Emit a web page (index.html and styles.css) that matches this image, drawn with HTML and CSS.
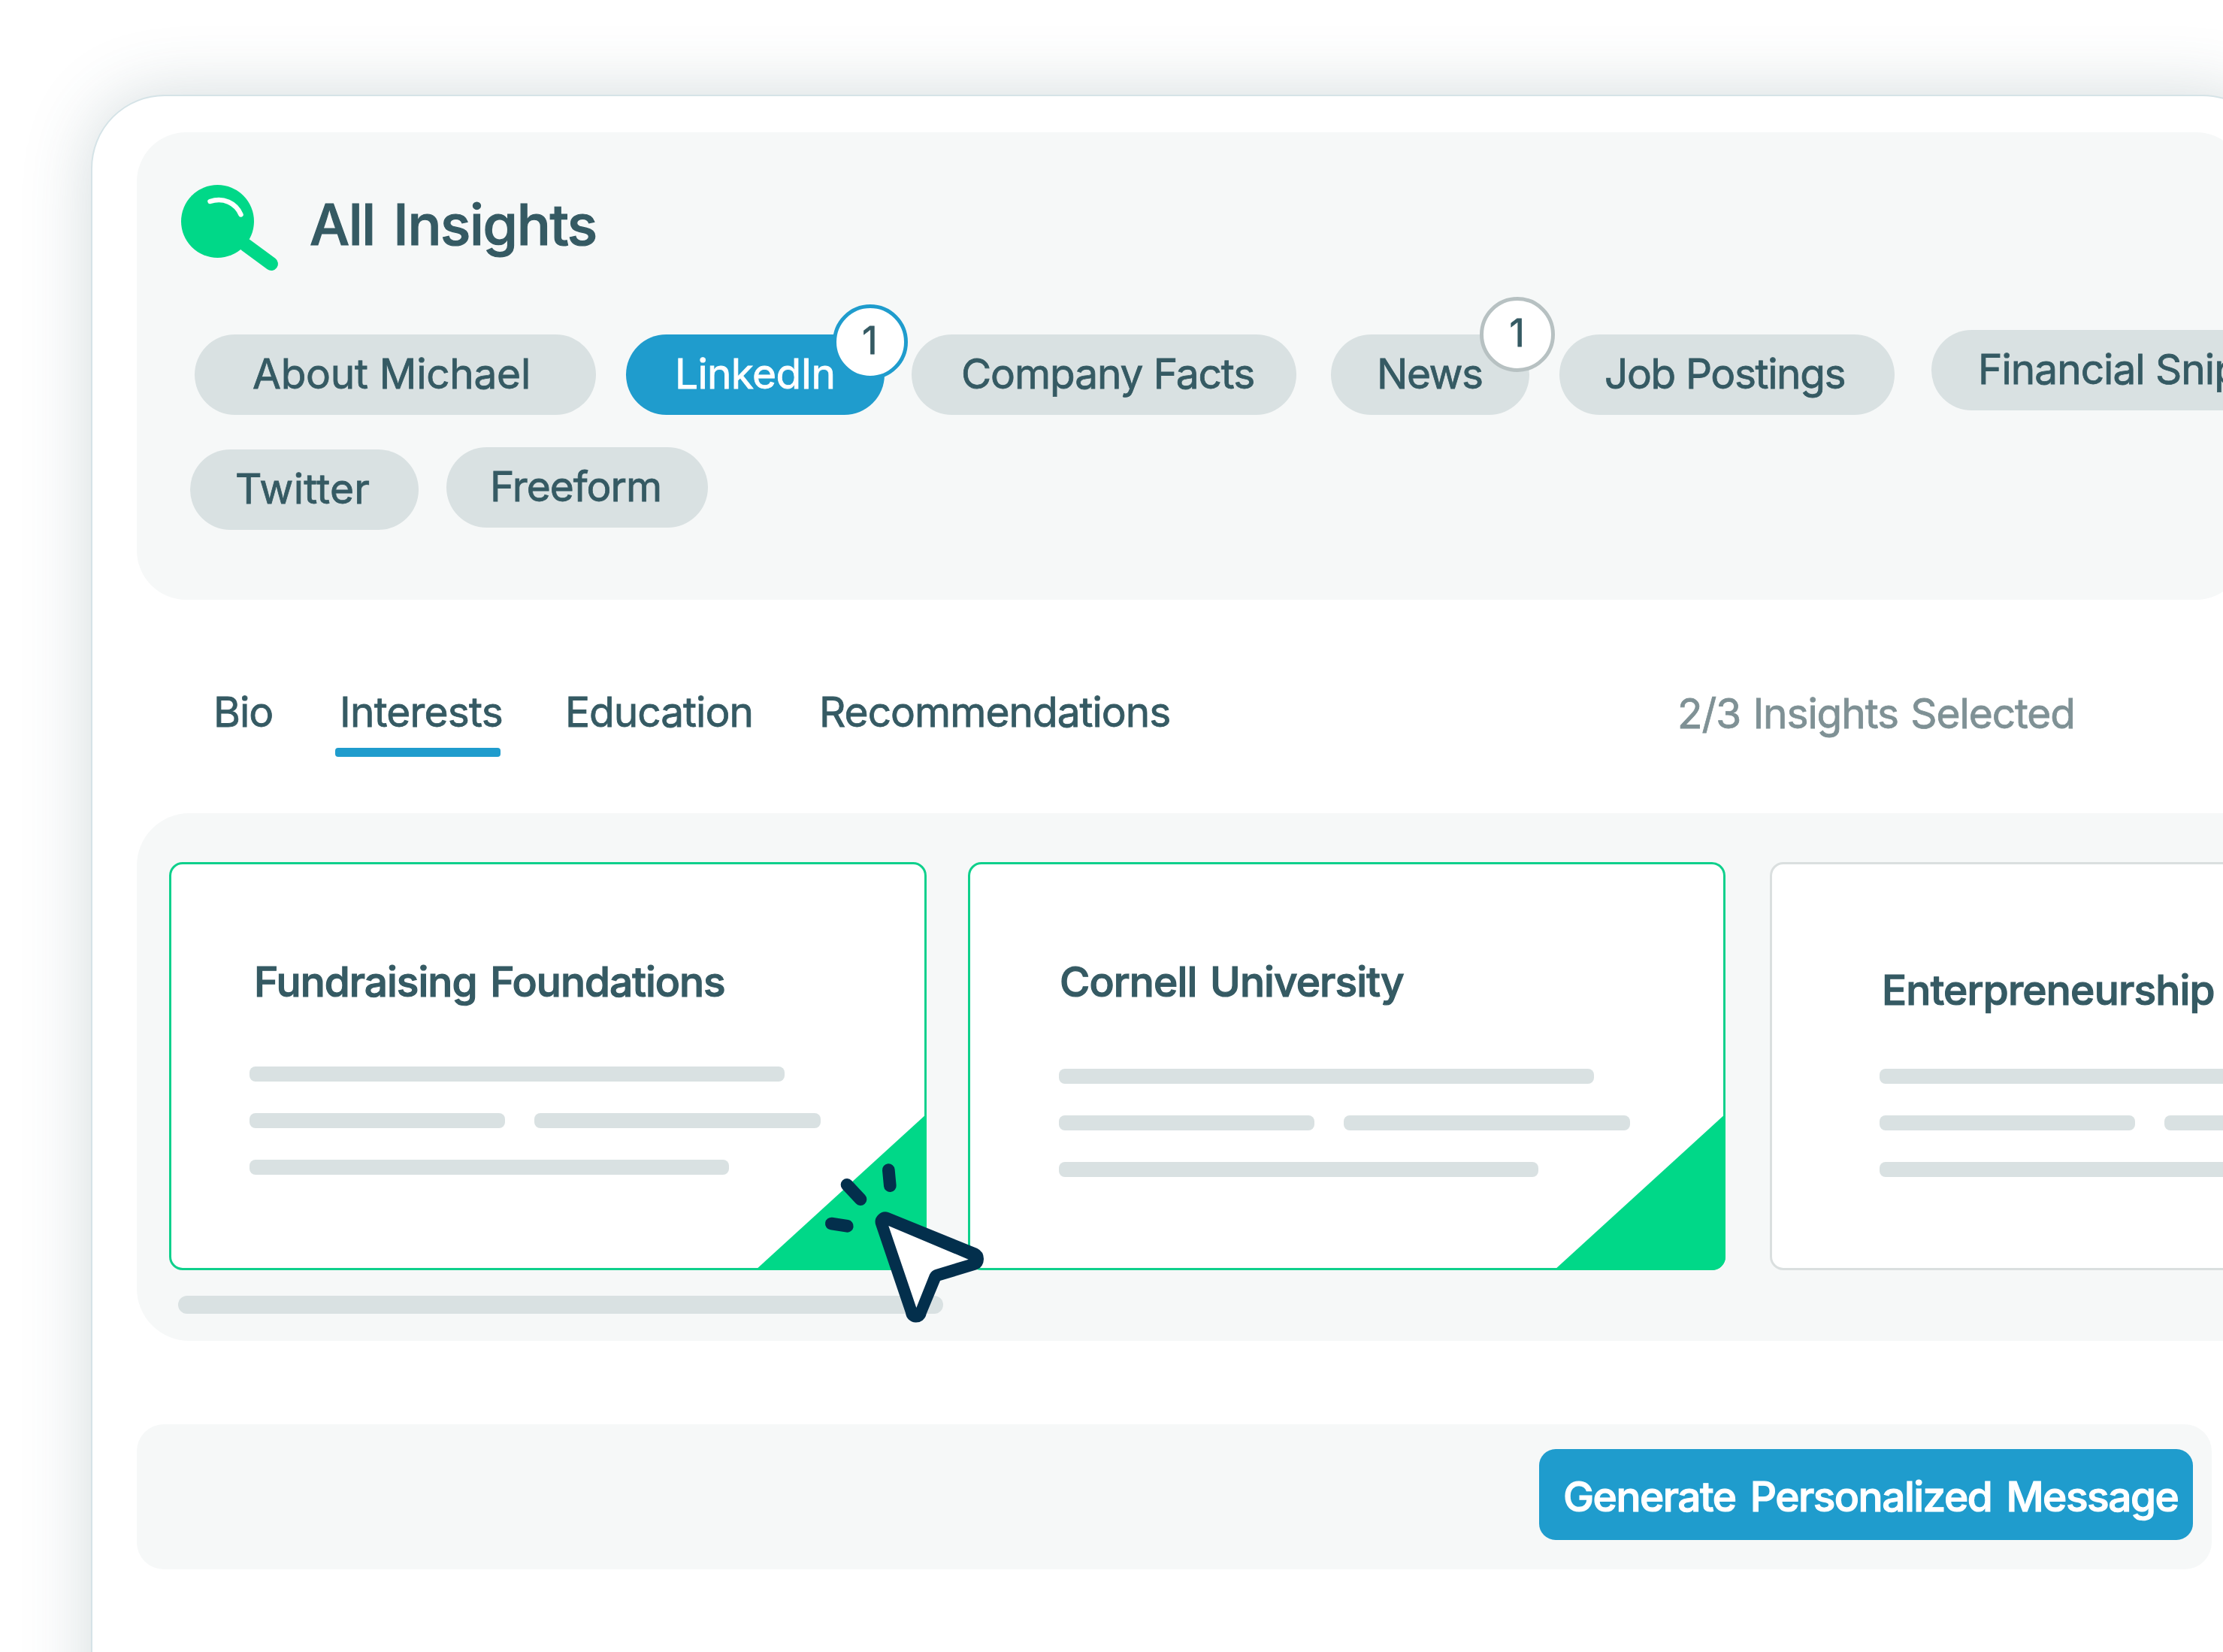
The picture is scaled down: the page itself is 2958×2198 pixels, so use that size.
FILE: index.html
```html
<!DOCTYPE html>
<html>
	<head>
		<meta charset="utf-8" />
		<title>All Insights</title>
		<link rel="stylesheet" href="styles.css">
	</head>
	<body>
		<div id="window">
			<div id="insights">
				<div class="title">
					<svg class="search" width="134" height="120" viewBox="0 0 134 120">
						<path d="M86 80L120 105" stroke="#00d888" stroke-width="18" stroke-linecap="round"/>
						<circle cx="48.5" cy="48.5" r="48.5" fill="#00d888"/>
						<path d="M38.500 22C56 16 73 24 79.500 39.500" fill="none" stroke="#fff" stroke-width="6.500" stroke-linecap="round"/>
					</svg>
					<h1>All Insights</h1>
				</div>
				<ul class="pills">
					<li class="about"><span>About Michael</span></li>
					<li class="linkedin active"><span>LinkedIn</span><em>1</em></li>
					<li class="company"><span>Company Facts</span></li>
					<li class="news"><span>News</span><em>1</em></li>
					<li class="jobs"><span>Job Postings</span></li>
					<li class="financial"><span>Financial Snippets</span></li>
				</ul>
				<ul class="pills second">
					<li class="twitter"><span>Twitter</span></li>
					<li class="freeform"><span>Freeform</span></li>
				</ul>
			</div>

			<div id="tabs">
				<ul>
					<li class="bio">Bio</li>
					<li class="interests active">Interests</li>
					<li class="education">Education</li>
					<li class="recommend">Recommendations</li>
				</ul>
				<p>2/3 Insights Selected</p>
			</div>

			<div id="cards">
				<div class="list">
					<div class="card selected first">
						<h2>Fundraising Foundations</h2>
						<div class="line"><i class="w1"></i></div>
						<div class="line"><i class="w2"></i><i class="w3"></i></div>
						<div class="line"><i class="w4"></i></div>
						<svg class="corner" width="228" height="208" viewBox="0 0 228 208"><path d="M228 0V208H0Z" fill="#00d888"/></svg>
						<svg class="cursor" width="212" height="150" viewBox="445 294 636 450">
							<path d="M647 540L766 891A42 42 0 0 0 849 895L904 762L1050 718A47 47 0 0 0 1052 633L699 490A40 40 0 0 0 647 540Z" fill="#032f4c"/>
							<path d="M698 543L1017 677L888 716Q870 720 862 737L809 870Z" fill="#fff"/>
							<path d="M698 320L704 383M532 379L586 437M470 534L533 544" stroke="#032f4c" stroke-width="50" stroke-linecap="round"/>
						</svg>
					</div>
					<div class="card selected second">
						<h2>Cornell University</h2>
						<div class="line"><i class="w1"></i></div>
						<div class="line"><i class="w2"></i><i class="w3"></i></div>
						<div class="line"><i class="w4"></i></div>
						<svg class="corner" width="228" height="208" viewBox="0 0 228 208"><path d="M228 0V208H0Z" fill="#00d888"/></svg>
					</div>
					<div class="card third">
						<h2>Enterpreneurship</h2>
						<div class="line"><i class="w1"></i></div>
						<div class="line"><i class="w2"></i><i class="w3"></i></div>
						<div class="line"><i class="w4"></i></div>
					</div>
				</div>
				<div class="scroll"></div>
			</div>

			<div id="footer">
				<a class="generate">Generate Personalized Message</a>
			</div>
		</div>
	</body>
</html>
```

FILE: styles.css
```css
*{
	padding: 0;
	margin: 0;
	box-sizing: border-box;
}
html,body{
	width: 2958px;
	height: 2198px;
	overflow: hidden;
}
body{
	background: #fff;
	font-family: Inter,"Liberation Sans",sans-serif;
	font-size: 55px;
	letter-spacing: -1px;
	color: #355a63;
	white-space: nowrap;
	-webkit-text-stroke: 0.8px;
}
li{
	list-style: none;
}
svg{
	display: block;
	overflow: visible;
}
#window{
	width: 2908px;
	height: 2400px;
	margin: 126px 0 0 121px;
	padding: 48px 0 0 59px;
	border: 2px solid #d5e3e7;
	border-radius: 98px;
	background: #fff;
	box-shadow: 0 0 92px rgba(53,90,99,0.22);
}
/*insights*/
#insights{
	width: 2806px;
	height: 622px;
	padding-top: 70px;
	border-radius: 66px;
	background: #f6f8f8;
}
.title{
	display: flex;
	height: 120px;
	padding-left: 59px;
}
.title h1{
	margin-left: 37px;
	font-size: 75px;
	line-height: 106px;
	font-weight: 500;
	letter-spacing: -1.4px;
	word-spacing: 6px;
	-webkit-text-stroke: 1.2px;
}
.pills{
	display: flex;
	margin-top: 79px;
	padding-left: 77px;
}
.pills li{
	position: relative;
	flex: none;
	height: 107px;
	line-height: 104px;
	border-radius: 54px;
	background: #d9e1e2;
}
.pills li.active{
	background: #1f9ccd;
	color: #fff;
}
.pills em{
	position: absolute;
	width: 100px;
	height: 100px;
	padding-right: 2px;
	border: 5px solid #b7c1c2;
	border-radius: 50%;
	background: #fff;
	color: #355a63;
	font-size: 50px;
	line-height: 86px;
	font-style: normal;
	text-align: center;
}
.pills .about{
	width: 534px;
	padding-left: 77px;
	letter-spacing: -0.3px;
}
.pills .linkedin{
	width: 344px;
	margin-left: 40px;
	padding-left: 65px;
	letter-spacing: -0.7px;
}
.pills .linkedin em{
	left: 275px;
	top: -40px;
	border-color: #1f9ccd;
}
.pills .company{
	width: 512px;
	margin-left: 36px;
	padding-left: 66px;
	letter-spacing: -1.1px;
}
.pills .news{
	width: 264px;
	margin-left: 46px;
	padding-left: 61px;
	letter-spacing: -1.5px;
}
.pills .news em{
	left: 198px;
	top: -50px;
}
.pills .jobs{
	width: 446px;
	margin-left: 40px;
	padding-left: 60px;
	letter-spacing: -1.4px;
}
.pills .financial{
	width: 560px;
	margin: -6px 0 0 49px;
	padding-left: 62px;
}
.second.pills{
	margin-top: 43px;
	padding-left: 71px;
}
.pills .twitter{
	width: 304px;
	margin-top: 3px;
	padding-left: 60px;
	letter-spacing: 0.3px;
}
.pills .freeform{
	width: 348px;
	margin-left: 37px;
	padding-left: 58px;
}
/*tabs*/
#tabs{
	display: flex;
	height: 284px;
	padding: 113px 0 0 101px;
}
#tabs ul{
	display: flex;
	width: 1949px;
}
#tabs li{
	height: 96px;
	line-height: 72px;
}
#tabs .bio{
	width: 163px;
	padding-left: 1px;
}
#tabs .interests{
	width: 220px;
	text-indent: 6px;
	letter-spacing: -0.8px;
}
#tabs .active:after{
	content: "";
	display: block;
	height: 12px;
	margin-top: 12px;
	border-radius: 4px;
	background: #1f9ccd;
}
#tabs .education{
	margin-left: 86px;
	width: 338px;
}
#tabs p{
	line-height: 76px;
	letter-spacing: -1.1px;
	word-spacing: 2px;
	color: #7f9195;
}
/*cards*/
#cards{
	width: 2900px;
	height: 702px;
	padding: 65px 0 0 43px;
	border-radius: 70px;
	background: #f6f8f8;
}
.list{
	display: flex;
}
.card{
	position: relative;
	flex: none;
	width: 1008px;
	height: 543px;
	border: 3px solid #dadfdf;
	border-radius: 18px;
	background: #fff;
}
.card.selected{
	border-color: #0fd08c;
}
.card h2{
	height: 72px;
	line-height: 72px;
	font-size: 55px;
	font-weight: 500;
	-webkit-text-stroke: 1.2px;
}
.first{
	padding: 120px 0 0 104px;
}
.list .second{
	margin-left: 55px;
	padding: 120px 0 0 118px;
}
.third{
	margin-left: 59px;
	padding: 131px 0 0 143px;
}
.first h2{
	margin: 0 0 77px 6px;
	letter-spacing: -1px;
	word-spacing: 4px;
}
.second h2{
	margin: 0 0 80px 1px;
	letter-spacing: -0.9px;
	word-spacing: 4px;
}
.third h2{
	margin: 0 0 69px 3px;
	letter-spacing: -0.8px;
}
.line{
	display: flex;
	margin-bottom: 42px;
}
.line i{
	height: 20px;
	border-radius: 8px;
	background: #d9e1e2;
}
.line .w1{
	width: 712px;
}
.line .w2{
	width: 340px;
	margin-right: 39px;
}
.line .w3{
	width: 381px;
}
.line .w4{
	width: 638px;
}
.corner{
	position: absolute;
	right: -3px;
	bottom: -3px;
	border-radius: 0 0 18px 0;
	overflow: hidden;
}
.first .corner{
	border-radius: 0;
}
.cursor{
	position: absolute;
	left: 870px;
	top: 398px;
	z-index: 2;
}
.scroll{
	width: 1018px;
	height: 24px;
	margin: 34px 0 0 12px;
	border-radius: 12px;
	background: #d9e1e2;
}
/*footer*/
#footer{
	display: flex;
	justify-content: flex-end;
	width: 2761px;
	height: 193px;
	margin-top: 111px;
	padding: 33px 25px 0 0;
	border-radius: 36px;
	background: #f6f8f8;
}
.generate{
	width: 870px;
	height: 121px;
	padding-left: 32px;
	border-radius: 22px;
	background: #1f9ccd;
	color: #fff;
	font-weight: 500;
	line-height: 126px;
	letter-spacing: -1.5px;
	word-spacing: 6px;
	-webkit-text-stroke: 1.2px;
}
```
